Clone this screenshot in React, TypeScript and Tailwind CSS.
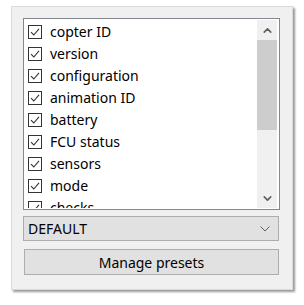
import { ChevronUp, ChevronDown } from "lucide-react";

const items = [
  "copter ID",
  "version",
  "configuration",
  "animation ID",
  "battery",
  "FCU status",
  "sensors",
  "mode",
  "checks",
];

const CheckBox = () => (
  <span className="w-[14px] h-[14px] border border-[#333333] bg-white flex items-center justify-center shrink-0">
    <svg width="10" height="10" viewBox="0 0 10 10">
      <path d="M1 5.2 L3.8 8 L9 1.8" fill="none" stroke="#333333" strokeWidth="1.1" />
    </svg>
  </span>
);

export default function App() {
  return (
    <div
      className="w-[304px] h-[305px] bg-white pt-[6px] pl-[11px]"
      style={{ fontFamily: '"Noto Sans", "Segoe UI", sans-serif' }}
    >
      <div className="w-[282px] h-[284px] bg-[#f0f0f0] border border-[#dadada] shadow-[2px_2px_2px_rgba(0,0,0,0.4)] pt-[11px] pl-[11px]">
        {/* list of fields */}
        <div className="w-[257px] h-[192px] border border-[#828790] bg-white flex p-[1px]">
          <div className="flex-1 overflow-hidden pt-[1px]">
            {items.map((label) => (
              <div key={label} className="h-[22px] flex items-center pl-[3px] gap-[8px] text-[14px] text-black leading-none">
                <CheckBox />
                <span>{label}</span>
              </div>
            ))}
          </div>
          <div className="w-[20px] bg-[#f0f0f0] flex flex-col mr-[1px]">
            <div className="h-[20px] flex items-center justify-center text-[#606060]">
              <ChevronUp size={13} strokeWidth={3} />
            </div>
            <div className="h-[90px] bg-[#cdcdcd]" />
            <div className="flex-1" />
            <div className="h-[20px] flex items-center justify-center text-[#606060]">
              <ChevronDown size={13} strokeWidth={3} />
            </div>
          </div>
        </div>

        {/* preset select */}
        <div className="mt-[6px] w-[256px] h-[25px] bg-[#e1e1e1] border border-[#adadad] flex items-center justify-between pl-[4px] pr-[8px] text-[14px] text-black">
          <span>DEFAULT</span>
          <svg width="10" height="6" viewBox="0 0 10 6">
            <path d="M0.5 0.5 L5 5 L9.5 0.5" fill="none" stroke="#606060" strokeWidth="1" />
          </svg>
        </div>

        <button className="mt-[8px] ml-[1px] w-[255px] h-[26px] bg-[#e1e1e1] border border-[#adadad] text-[14px] text-black flex items-center justify-center">
          Manage presets
        </button>
      </div>
    </div>
  );
}
